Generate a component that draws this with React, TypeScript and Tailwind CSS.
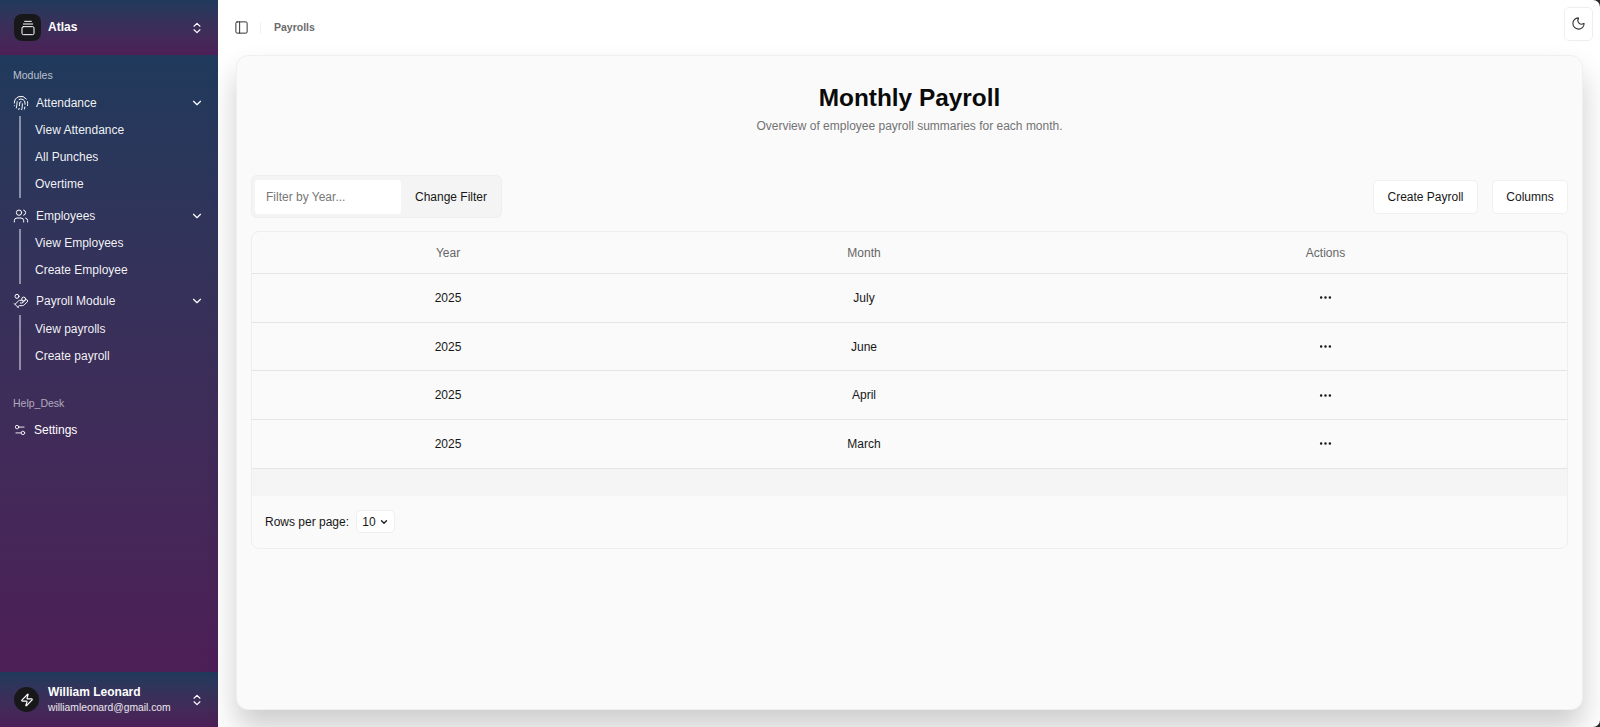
import React from "react";
import {
  ChevronDown,
  ChevronsUpDown,
  Ellipsis,
  Fingerprint,
  GalleryVerticalEnd,
  HandCoins,
  Moon,
  PanelLeft,
  Settings2,
  Users,
  Zap,
} from "lucide-react";

const modules = [
  { label: "Attendance", icon: Fingerprint, items: ["View Attendance", "All Punches", "Overtime"] },
  { label: "Employees", icon: Users, items: ["View Employees", "Create Employee"] },
  { label: "Payroll Module", icon: HandCoins, items: ["View payrolls", "Create payroll"] },
];

const rows = [
  { year: "2025", month: "July" },
  { year: "2025", month: "June" },
  { year: "2025", month: "April" },
  { year: "2025", month: "March" },
];

const Sidebar = () => {
  return (
    <aside className="flex h-[727px] w-[218px] shrink-0 flex-col text-white">
      <div className="flex h-[55px] shrink-0 items-center gap-[7px] bg-gradient-to-b from-[#1f3a5c] to-[#4d1f57] pl-[14px] pr-[14px]">
        <div className="flex h-[27px] w-[27px] items-center justify-center rounded-lg bg-[#18181b]">
          <GalleryVerticalEnd size={16} strokeWidth={1.5} />
        </div>
        <span className="flex-1 pb-[2px] text-[12px] font-bold">Atlas</span>
        <ChevronsUpDown size={14} strokeWidth={2} />
      </div>

      <nav className="flex-1 bg-gradient-to-b from-[#1f3a5c] to-[#4d1f57] pl-[13px] pr-[14px]">
        <p className="mt-[13px] text-[10.5px] leading-[14px] text-white/70">Modules</p>
        <div className="mt-[7px] flex flex-col gap-[4px]">
          {modules.map((mod) => (
            <div key={mod.label}>
              <div className="flex h-[27px] items-center gap-[7px] text-[12px]">
                <mod.icon size={16} strokeWidth={1.5} />
                <span className="flex-1 text-white/95">{mod.label}</span>
                <ChevronDown size={14} strokeWidth={2} />
              </div>
              <div className="ml-[6px] border-l-2 border-white/45 pl-[14px]">
                {mod.items.map((item) => (
                  <div key={item} className="flex h-[27.4px] items-center text-[12px] text-white/95">
                    {item}
                  </div>
                ))}
              </div>
            </div>
          ))}
        </div>
        <p className="mt-[26px] text-[10.5px] leading-[14px] text-white/60">Help_Desk</p>
        <div className="mt-[7px] flex h-[27px] items-center gap-[7px] text-[12px]">
          <Settings2 size={14} strokeWidth={1.5} />
          <span>Settings</span>
        </div>
      </nav>

      <div className="flex h-[55px] shrink-0 items-center gap-[9px] bg-gradient-to-b from-[#1f3a5c] to-[#4d1f57] pl-[14px] pr-[14px]">
        <div className="flex h-[25px] w-[25px] items-center justify-center rounded-full bg-[#18181b]">
          <Zap size={14} strokeWidth={2} />
        </div>
        <div className="flex-1">
          <p className="text-[12px] font-bold leading-[15px]">William Leonard</p>
          <p className="text-[10.3px] leading-[15px] text-white/90">williamleonard@gmail.com</p>
        </div>
        <ChevronsUpDown size={14} strokeWidth={2} />
      </div>
    </aside>
  );
};

const PayrollTable = () => {
  return (
    <div className="mt-[13px] overflow-hidden rounded-lg border border-[#eeeeee]">
      <div className="grid h-[42px] grid-cols-[392px_440px_minmax(0,1fr)] items-center border-b border-[#e5e5e5] text-center text-[12px] text-[#666666]">
        <div>Year</div>
        <div>Month</div>
        <div>Actions</div>
      </div>
      {rows.map((row) => (
        <div
          key={row.month}
          className="grid h-[48.7px] grid-cols-[392px_440px_minmax(0,1fr)] items-center border-b border-[#e5e5e5] text-center text-[12px] text-[#171717]"
        >
          <div>{row.year}</div>
          <div>{row.month}</div>
          <div className="flex justify-center">
            <Ellipsis size={15} strokeWidth={2} />
          </div>
        </div>
      ))}
      <div className="h-[27px] bg-[#f5f5f5]" />
      <div className="flex h-[52px] items-center gap-[7px] px-[13px] text-[12px] text-[#171717]">
        <span>Rows per page:</span>
        <div className="flex h-[23px] w-[39px] items-center justify-center gap-[3px] rounded-[5px] border border-[#efefef] bg-white">
          10
          <ChevronDown size={10} strokeWidth={3} />
        </div>
      </div>
    </div>
  );
};

export default function App() {
  return (
    <div className="h-[727px] w-[1600px] overflow-hidden bg-[#2a2a2a]">
      <div className="flex h-full w-full overflow-hidden rounded-r-[7px] bg-white font-['Liberation_Sans',Arial,sans-serif]">
        <Sidebar />
        <main className="relative flex min-w-0 flex-1 flex-col">
          <header className="flex h-[55px] shrink-0 items-center pl-[16px] pr-[7px]">
            <PanelLeft size={15} strokeWidth={1.5} className="text-[#262626]" />
            <div className="ml-[11px] h-[12px] w-px bg-[#f0f0f0]" />
            <span className="ml-[13px] text-[10.5px] font-bold text-[#6b6b6b]">Payrolls</span>
            <button className="ml-auto flex h-[34px] w-[29px] -translate-y-[4px] items-center justify-center rounded-[5px] border border-[#eeeeee] bg-white">
              <Moon size={15} strokeWidth={1.75} className="text-[#333333]" />
            </button>
          </header>

          <section className="ml-[18px] mr-[17px] h-[655px] rounded-xl border border-[#f0f0f0] bg-[#fafafa] px-[14px] shadow-[0_18px_30px_rgba(0,0,0,0.2)]">
            <h1 className="mt-[24px] text-center text-[24.4px] font-bold leading-[36px] text-[#0a0a0a]">Monthly Payroll</h1>
            <p className="mt-[2px] text-center text-[12px] leading-[16px] text-[#737373]">
              Overview of employee payroll summaries for each month.
            </p>

            <div className="mt-[41px] flex items-center justify-between">
              <div className="flex h-[43px] items-center rounded-md border border-[#eeeeee] bg-[#f4f4f4] pl-[3px]">
                <div className="flex h-[34px] w-[146px] items-center rounded-[4px] bg-white pl-[11px] text-[12px] text-[#777777]">
                  Filter by Year...
                </div>
                <div className="px-[14px] text-[12px] text-[#171717]">Change Filter</div>
              </div>
              <div className="flex gap-[14px]">
                <button className="flex h-[34px] w-[105px] items-center justify-center rounded-[5px] border border-[#f0f0f0] bg-white text-[12px] text-[#171717]">
                  Create Payroll
                </button>
                <button className="flex h-[34px] w-[76px] items-center justify-center rounded-[5px] border border-[#f0f0f0] bg-white text-[12px] text-[#171717]">
                  Columns
                </button>
              </div>
            </div>

            <PayrollTable />
          </section>
        </main>
      </div>
    </div>
  );
}
